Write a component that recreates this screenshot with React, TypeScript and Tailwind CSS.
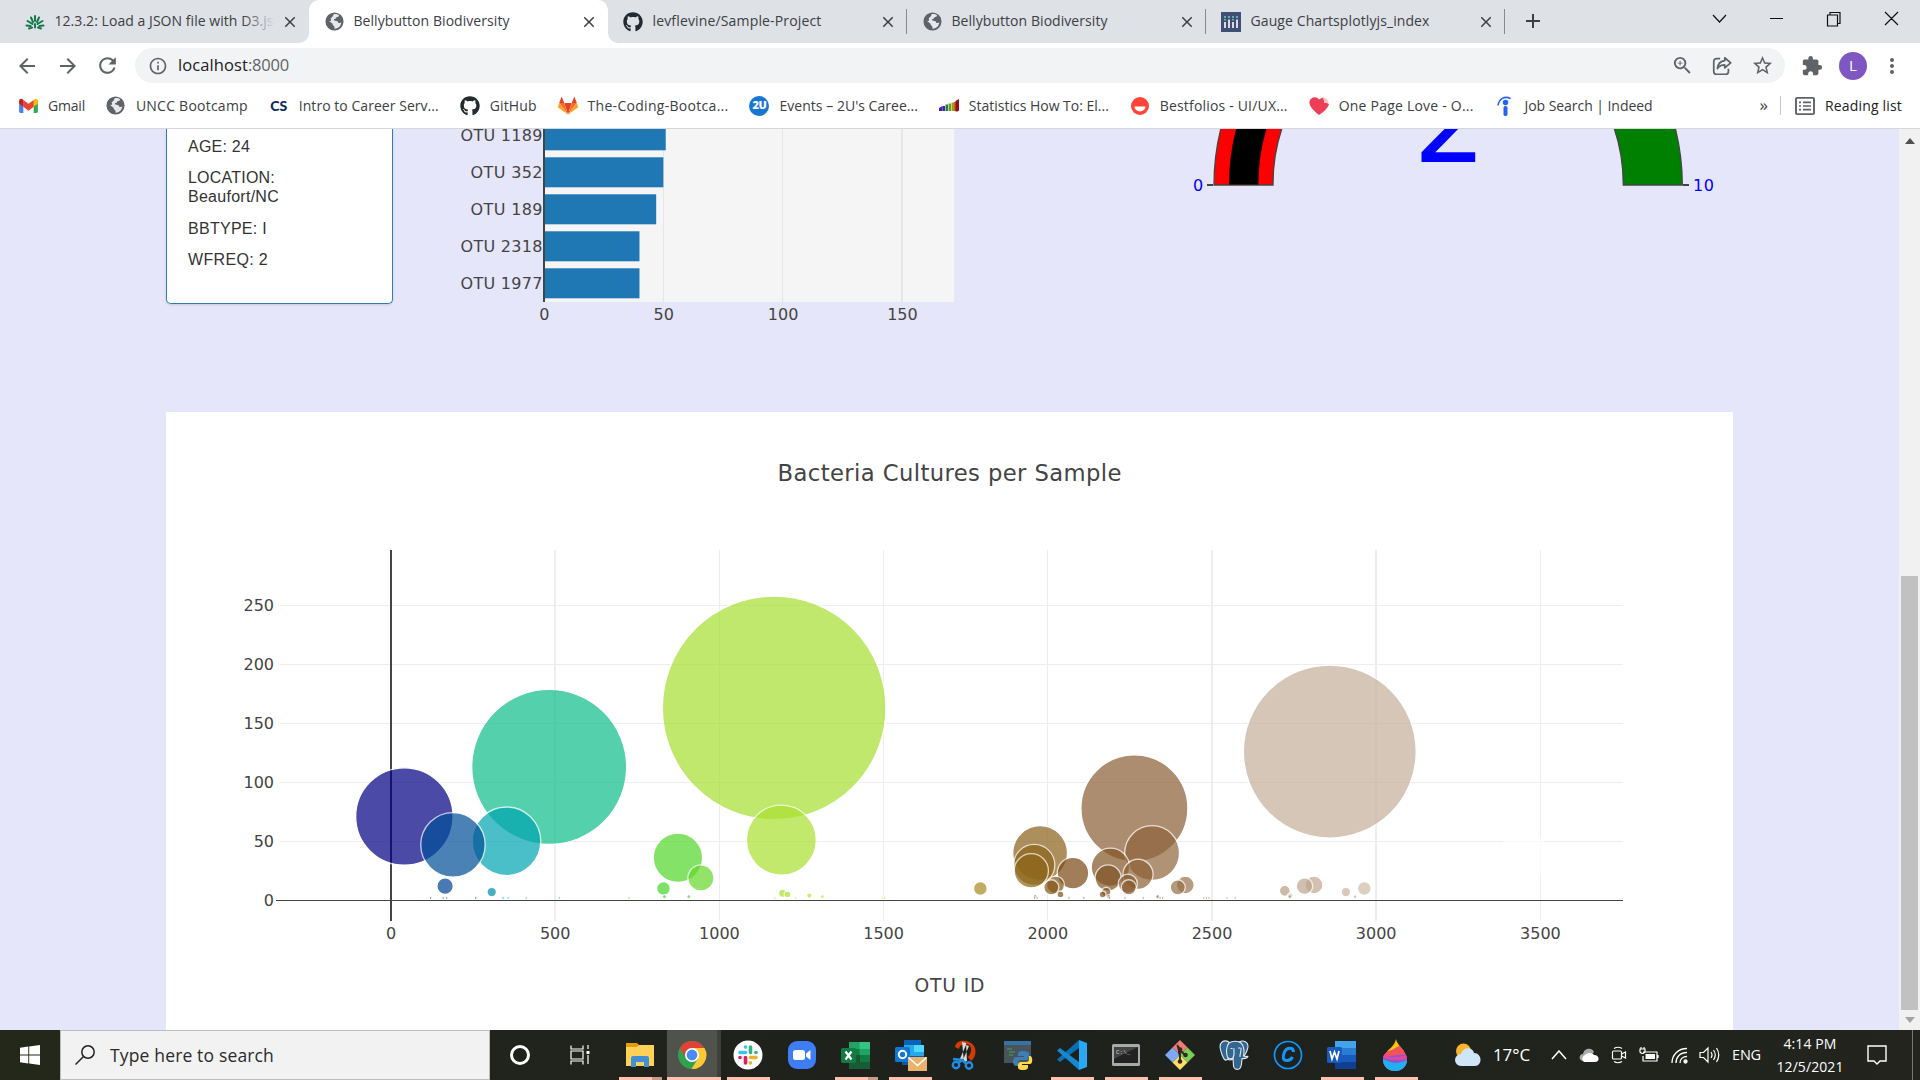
import { useLayoutEffect, useRef, useState } from "react";
import type { ReactNode } from "react";
import { FaGithub } from "react-icons/fa";
import {
  MdArrowBack, MdArrowForward, MdRefresh, MdInfoOutline, MdZoomIn, MdStarBorder,
  MdExtension, MdMoreVert, MdClose, MdAdd,
} from "react-icons/md";

/** Single line of text whose tracking is tuned so that it spans `w` pixels. */
function Fit({ w, children, className = "" }: { w: number; children: string; className?: string }) {
  const ref = useRef<HTMLSpanElement>(null);
  const [ls, setLs] = useState(0);
  useLayoutEffect(() => {
    const el = ref.current;
    if (!el) return;
    setLs((w - el.getBoundingClientRect().width) / children.length);
  }, []);
  return (
    <span ref={ref} className={"inline-block shrink-0 whitespace-nowrap " + className} style={{ letterSpacing: ls }}>
      {children}
    </span>
  );
}

const Globe = () => (
  <svg viewBox="0 0 20 20" className="size-[19px] shrink-0">
    <circle cx="10" cy="10" r="9.500" fill="#5f6368" />
    <path fill="#e6e8eb" d="M9 2.300C11 1.800 13.500 2.400 14.800 3.500 14.500 5 13.500 5.500 12 5.600c-.3 1.400-1.200 1.900-2.700 2.100.2 1.300.9 1.700 2.700 1.800 1.600.1 2 1 2 2.200h1.500c.8 0 1.300-.7 1.500-1.500.3 3-1.600 6-4.600 7-.8.300-1.800.400-2.400.300.2-1.500-.1-2.600-1.300-3.300-.6-.4-.8-1-.8-1.900L3 8.400C3.500 9 4.500 9.500 5.500 9.500 6.800 9.500 6.500 7.500 5.800 7 7 5.900 8.700 4.500 9 2.300z" />
  </svg>
);

const Canvas = () => (
  <svg viewBox="0 0 20 20" className="size-5" fill="none" stroke="#127a4b" strokeWidth="2" strokeLinecap="round">
    <path d="M10 4v5M6 5.500l2 4.500M14 5.500l-2 4.500M2.500 9l5 3M17.500 9l-5 3M1.500 13.500l4 .5M18.500 13.500l-4 .5M4 16.500l3-1M16 16.500l-3-1M10 12v3.500" />
  </svg>
);
const PlotlyIcon = () => (
  <svg viewBox="0 0 20 20" className="size-5">
    <path fill="#3f4f75" d="M0 0h20v20H0z" />
    <path stroke="#fff" strokeWidth="1.600" d="M4 10v6M8 7.500V16M12 10v6M16 7.500V16" />
    <path stroke="#79c5c0" strokeWidth="1.600" d="M4 4v2M4 7v1.500M8 4v2M12 4v2M12 7v1.500M16 4v2" />
  </svg>
);

const tabs: { icon: ReactNode; label: string; w: number; active?: boolean; fade?: boolean; sep?: boolean }[] = [
  { icon: <Canvas />, label: "12.3.2: Load a JSON file with D3.js", w: 219, fade: true },
  { icon: <Globe />, label: "Bellybutton Biodiversity", w: 156, active: true },
  { icon: <FaGithub className="size-5 text-[#24292e]" />, label: "levflevine/Sample-Project", w: 169, sep: true },
  { icon: <Globe />, label: "Bellybutton Biodiversity", w: 156, sep: true },
  { icon: <PlotlyIcon />, label: "Gauge Chartsplotlyjs_index", w: 179, sep: true },
];

function TabStrip() {
  return (
    <div className="flex h-[43px] bg-[#dee1e6] pl-[10px] text-[14px] text-[#3c4043]">
      {tabs.map((t, i) => (
        <div key={i} className={"relative flex w-[299px] shrink-0 items-center pl-[15px] " + (t.active ? "rounded-t-[10px] bg-white" : "")}>
          {t.active && (
            <>
              <svg viewBox="0 0 10 10" className="absolute bottom-0 -left-[10px] size-[10px]"><path fill="#fff" d="M10 0v10H0A10 10 0 0 0 10 0" /></svg>
              <svg viewBox="0 0 10 10" className="absolute -right-[10px] bottom-0 size-[10px]"><path fill="#fff" d="M0 0v10h10A10 10 0 0 1 0 0" /></svg>
            </>
          )}
          <span className="flex w-5 shrink-0 items-center justify-center">{t.icon}</span>
          <span className="relative ml-[9.500px] w-[220px] overflow-hidden pb-[2px]">
            <Fit w={t.w}>{t.label}</Fit>
            {t.fade && <span className="absolute inset-y-0 right-0 w-8 bg-linear-to-r from-transparent to-[#dee1e6]" />}
          </span>
          <MdClose className="ml-[6px] size-[18px] shrink-0" />
          {t.sep && <span className="ml-auto h-[25px] w-px bg-[#868b90]" />}
        </div>
      ))}
      <MdAdd className="mt-[9px] ml-[16px] size-[24px] text-[#3c4043]" />
      <svg viewBox="0 0 200 30" className="mt-[3px] mr-[10px] ml-auto h-[30px] w-[200px]" fill="none" stroke="#111" strokeWidth="1.200">
        <path d="M3 12l6.500 7 6.500-7M60 15.500h13M117.500 12h10v11h-10zM120 12V9.500h10v11h-2.500M175 9l13 13M188 9l-13 13" />
      </svg>
    </div>
  );
}

function AddressBar() {
  return (
    <div className="flex h-[45px] items-center bg-white text-[#5f6368]">
      <MdArrowBack className="ml-[15px] size-[24px]" />
      <MdArrowForward className="ml-[17px] size-[24px]" />
      <MdRefresh className="ml-[15px] size-[25px]" />
      <div className="ml-[15px] flex h-[35px] w-[1650px] items-center rounded-full bg-[#f1f3f4] pl-[13px]">
        <MdInfoOutline className="size-[20px]" />
        <span className="ml-[10px] flex text-[16.500px]">
          <Fit w={70} className="text-[#202124]">localhost</Fit>
          <Fit w={41}>:8000</Fit>
        </span>
        <MdZoomIn className="ml-auto size-[23px]" />
        <svg viewBox="0 0 24 24" className="ml-[17px] size-[22px]" fill="none" stroke="currentColor" strokeWidth="1.900" strokeLinejoin="round">
          <path d="M10 4H6a3 3 0 0 0-3 3v11a3 3 0 0 0 3 3h10a3 3 0 0 0 3-3v-3M15 3l6.500 5.500L15 14v-3.200c-4 0-6 1.200-8 4 .5-5 3-8 8-8.600z" />
        </svg>
        <MdStarBorder className="mr-[11px] ml-[18px] size-[23px]" />
      </div>
      <MdExtension className="ml-[16px] size-[22px]" />
      <span className="ml-[16px] flex size-[28px] items-center justify-center rounded-full bg-[#7e57c2] text-[15px] text-white">L</span>
      <MdMoreVert className="ml-[13px] size-[24px]" />
    </div>
  );
}

const Gmail = () => (
  <svg viewBox="0 0 20 16" className="h-[15px] w-[19px]">
    <path fill="#4285f4" d="M0 3h4.500v13H1.500A1.500 1.500 0 0 1 0 14.500z" />
    <path fill="#34a853" d="M15.500 3H20v11.500a1.500 1.500 0 0 1-1.500 1.500h-3z" />
    <path fill="#fbbc04" d="M15.500 2l1.200-1A2.200 2.200 0 0 1 20 3v3l-4.500 3.400z" />
    <path fill="#ea4335" d="M4.500 2L10 6.200 15.500 2v7.400L10 13.500 4.500 9.400z" />
    <path fill="#c5221f" d="M0 3A2.200 2.200 0 0 1 3.300 1l1.200 1v7.400L0 6z" />
  </svg>
);
const Gitlab = () => (
  <svg viewBox="0 0 20 19" className="h-[19px] w-5">
    <path fill="#e24329" d="M10 18.500L6.300 7h7.400z" />
    <path fill="#fc6d26" d="M10 18.500L6.300 7H1.200zM10 18.500L13.700 7h5.100z" />
    <path fill="#fca326" d="M1.200 7L0 10.500q-.2.700.4 1.200L10 18.500zM18.800 7l1.200 3.500q.2.700-.4 1.200L10 18.500z" />
    <path fill="#e24329" d="M1.200 7L3.700.500 6.300 7zM18.800 7L16.300.500 13.700 7z" />
  </svg>
);
const StatBars = () => (
  <svg viewBox="0 0 20 13" className="h-[13px] w-5">
    <path fill="#4a1fc0" d="M0 9l3.500-2v5H0z" /><path fill="#3a2f9a" d="M3.500 7H6v5H3.500z" /><path fill="#2c7a48" d="M6.500 5.500H9V12H6.500z" />
    <path fill="#5fa52c" d="M9.500 4.500H12V12H9.500z" /><path fill="#a9981c" d="M12.500 3.500H15V12h-2.500z" />
    <path fill="#c8641e" d="M15 3h2v9h-2z" /><path fill="#8f1018" d="M16.500 2L20 0v11.500l-1.500 1h-2z" />
  </svg>
);

const bookmarks: { icon: ReactNode; label: string; w: number }[] = [
  { icon: <Gmail />, label: "Gmail", w: 37 },
  { icon: <Globe />, label: "UNCC Bootcamp", w: 112 },
  { icon: <span className="font-[Lato] text-[14px] font-black text-[#0b2a5b]">CS</span>, label: "Intro to Career Serv...", w: 140 },
  { icon: <FaGithub className="size-5 text-[#24292e]" />, label: "GitHub", w: 47 },
  { icon: <Gitlab />, label: "The-Coding-Bootca...", w: 141 },
  { icon: <span className="flex size-5 shrink-0 items-center justify-center rounded-full bg-[#1976d2] text-[11px] font-extrabold tracking-tighter text-white">2U</span>, label: "Events – 2U's Caree...", w: 138.5 },
  { icon: <StatBars />, label: "Statistics How To: El...", w: 140 },
  { icon: <svg viewBox="0 0 18 18" className="size-[18px]"><circle cx="9" cy="9" r="9" fill="#ff4438" /><path fill="#fff" d="M3.500 9.500h11a5.500 5 0 0 1-11 0z" /></svg>, label: "Bestfolios - UI/UX...", w: 128 },
  { icon: <svg viewBox="0 0 20 18" className="h-[18px] w-5"><path fill="#ee3d57" d="M10 18C2 11.500 0 8 .5 4.500 1.200.500 7-1.500 10 2.500l4-2 6 7C18.500 11.500 15 14.500 10 18z" /><path fill="#f7c4c4" d="M13.500.500c4-.5 6 3 6 6.500-1.500-1.500-3-1-4.500-1 .5-2-.5-4-1.500-5.500z" /></svg>, label: "One Page Love - O...", w: 135 },
  { icon: <svg viewBox="0 0 20 20" className="size-5" fill="#2164f3"><circle cx="10.500" cy="6.500" r="2.700" /><rect x="8.500" y="10" width="4" height="10" rx="1.800" /><path fill="none" stroke="#2164f3" strokeWidth="1.500" d="M3 9.500C4 3 9.500-.5 15.500 2.500" /></svg>, label: "Job Search | Indeed", w: 128 },
];

function Bookmarks() {
  return (
    <div className="flex h-[41px] items-center gap-[20.900px] border-b border-[#d5d7db] bg-white pb-[5px] pl-[18px] text-[14px] text-[#3c4043]">
      {bookmarks.map((b) => (
        <div key={b.label} className="flex shrink-0 items-center gap-[10px]">
          <span className="flex w-5 items-center justify-center">{b.icon}</span>
          <Fit w={b.w}>{b.label}</Fit>
        </div>
      ))}
      <div className="ml-auto flex items-center pr-[18px]">
        <span className="pb-[2px] text-[17px] leading-none">»</span>
        <span className="ml-[12px] h-[19px] w-px bg-[#c4c7cb]" />
        <svg viewBox="0 0 20 20" className="mr-[10px] ml-[14px] h-[18px] w-5" fill="none" stroke="#5f6368" strokeWidth="1.900" preserveAspectRatio="none">
          <rect x="1" y="1" width="18" height="18" rx="1" /><path d="M4 6h2M8 6h8M4 10h2M8 10h8M4 14h2M8 14h8" />
        </svg>
        <Fit w={77} className="text-[#202124]">Reading list</Fit>
      </div>
    </div>
  );
}

function Demographics() {
  return (
    <div className="flex h-[175px] w-[227px] shrink-0 flex-col gap-[12.300px] rounded-b-[5px] border border-t-0 border-[#337ab7] bg-white pt-[8px] pl-[21px] font-['Liberation_Sans'] text-[16px] leading-[19px] text-[#333] shadow-sm">
      <p><Fit w={62}>AGE: 24</Fit></p>
      <p><Fit w={87}>LOCATION:</Fit><br /><Fit w={91}>Beaufort/NC</Fit></p>
      <p><Fit w={79}>BBTYPE: I</Fit></p>
      <p><Fit w={80}>WFREQ: 2</Fit></p>
    </div>
  );
}

const bars = [
  { id: "OTU 1189", v: 51, y: 120.3 }, { id: "OTU 352", v: 50, y: 157.3 }, { id: "OTU 189", v: 47, y: 194.3 },
  { id: "OTU 2318", v: 40, y: 231.3 }, { id: "OTU 1977", v: 40, y: 268.3 },
];

function BarChart() {
  return (
    <svg viewBox="450 129 510 211" className="ml-[57px] h-[211px] w-[510px] shrink-0 font-['DejaVu_Sans'] text-[16px]" fill="#444">
      <rect x="544" y="129" width="410" height="173" fill="#f5f5f5" />
      <path stroke="#e6e6e6" d="M663.500 129v173M782.500 129v173" />
      <path stroke="#e6e6e6" strokeWidth="2" d="M902 129v173" />
      {bars.map((b) => (
        <g key={b.id}>
          <rect x="544" y={b.y} width={b.v * 2.387} height="30" fill="#1f77b4" />
          <text x="542.500" y={b.y + 20.2} textAnchor="end" textLength={b.id.length === 8 ? 82 : 72}>{b.id}</text>
        </g>
      ))}
      <path stroke="#444" strokeWidth="2" d="M544 129v173" />
      {[0, 50, 100, 150].map((v) => (
        <text key={v} x={544.4 + v * 2.387} y="320" textAnchor="middle">{v}</text>
      ))}
    </svg>
  );
}

function Gauge() {
  return (
    <svg viewBox="1180 129 550 80" className="ml-[220px] h-[80px] w-[550px] shrink-0 font-['DejaVu_Sans'] text-[16px]" fill="#00f">
      <path fill="red" stroke="#444" strokeWidth="1.300" d="M1214 185A234 234 0 0 1 1258.500 47.500L1306 82A175 175 0 0 0 1273 185z" />
      <path fill="#000" d="M1229 184.500A219.200 219.200 0 0 1 1270.500 56L1294.500 73A189.800 189.800 0 0 0 1258.400 184.500z" />
      <path fill="green" stroke="#444" strokeWidth="1.300" d="M1682.300 185A234 234 0 0 0 1637.500 47.500L1590 82A175 175 0 0 1 1623.300 185z" />
      <path stroke="#444" strokeWidth="2" d="M1207 185h6M1683 185h6" />
      <text x="1198" y="191" textAnchor="middle">0</text>
      <text x="1693" y="191" textLength="21">10</text>
      <text x="1413" y="162" className="text-[116px]">2</text>
    </svg>
  );
}

const otuIds = [1167, 2859, 482, 2264, 41, 1189, 352, 189, 2318, 1977, 3450, 874, 1959, 2191, 1950, 2077, 2275, 944, 2184, 2244, 2024, 2419, 2811, 165, 2782, 2247, 2011, 2396, 830, 2964, 1795, 2722, 307, 2178, 2908, 1193, 2167, 1208, 2039, 1274, 2739, 2737, 1314, 1962, 2186, 2335, 2936, 907, 833, 2483, 2475, 2491, 2291, 159, 2571, 2350, 2342, 2546, 725, 170, 1505, 513, 259, 1169, 258, 1232, 1497, 1498, 1503, 412, 2235, 1960, 1968, 121, 2065, 340, 2110, 2188, 357, 342];
const counts = [163, 126, 113, 78, 71, 51, 50, 47, 40, 40, 37, 36, 30, 28, 25, 23, 22, 19, 19, 14, 13, 13, 13, 12, 12, 11, 11, 11, 10, 10, 10, 8, 7, 7, 7, 6, 5, 5, 5, 4, 4, 3, 3, 3, 3, 3, 3, 3, 3];

const earth: [number, number[]][] = [[0, [0, 0, 130]], [0.1, [0, 180, 180]], [0.2, [40, 210, 40]], [0.4, [230, 230, 50]], [0.6, [120, 70, 20]], [1, [255, 255, 255]]];

function earthColor(id: number) {
  const t = (id - 41) / (3450 - 41);
  const i = Math.max(1, earth.findIndex(([s]) => s >= t));
  const [a, ca] = earth[i - 1];
  const [b, cb] = earth[i];
  return `rgb(${ca.map((c, k) => Math.round(c + ((cb[k] - c) * (t - a)) / (b - a))).join(",")})`;
}

function BubbleChart() {
  return (
    <svg viewBox="166 412 1567 618" className="h-[618px] w-[1567px] shrink-0 bg-white font-['DejaVu_Sans'] text-[16px]" fill="#444">
      <text x="777.500" y="481" className="text-[22.700px]" textLength="344">Bacteria Cultures per Sample</text>
      <path stroke="#eee" d="M280 605.500h1343M280 664.500h1343M280 723.500h1343M280 782.500h1343M280 841.500h1343M719.500 550v371M883.500 550v371M1047.500 550v371M1540.500 550v371" />
      <path stroke="#eee" strokeWidth="2" d="M555 550v371M1212 550v371M1376 550v371" />
      <path stroke="#444" strokeWidth="2" d="M391 550v371" />
      <path stroke="#444" d="M276 900.500h1347" />
      {otuIds.map((id, i) => {
        const v = counts[i] ?? 2;
        return <circle key={i} cx={390.9 + id * 0.3284} cy={900.3 - v * 1.18} r={v * 0.686} fill={earthColor(id)} stroke="#fff" strokeWidth="1.333" opacity="0.7" />;
      })}
      {[0, 50, 100, 150, 200, 250].map((v) => (
        <text key={v} x="274" y={906 - v * 1.18} textAnchor="end">{v}</text>
      ))}
      {[0, 500, 1000, 1500, 2000, 2500, 3000, 3500].map((v) => (
        <text key={v} x={391 + v * 0.3284} y="939" textAnchor="middle">{v}</text>
      ))}
      <text x="914.500" y="991.500" className="text-[18.700px]" textLength="70">OTU ID</text>
    </svg>
  );
}

const ic = "h-[30px] w-[30px]";
const Explorer = () => <svg viewBox="0 0 30 30" className={ic}><path fill="#e3a100" d="M1 3h11l3 3v5H1z" /><path fill="#ffd257" d="M1 7h11l2-2h15v21H1z" /><path fill="#3f8fd8" d="M6 27V18a2 2 0 0 1 2-2h14a2 2 0 0 1 2 2v9h-5v-5h-8v5z" /></svg>;
const Chrome = () => <svg viewBox="0 0 30 30" className={ic}><circle cx="15" cy="15" r="14" fill="#2fa14f" /><path fill="#fcc934" d="M15 8h12.500A14 14 0 0 1 14.500 29l6.500-10.500z" /><path fill="#e04336" d="M2.900 8A14 14 0 0 1 27.200 8H15a7 7 0 0 0-6.300 10.300z" /><circle cx="15" cy="15" r="7" fill="#fff" /><circle cx="15" cy="15" r="5.400" fill="#4a8af4" /></svg>;
const Slack = () => <svg viewBox="0 0 30 30" className={ic}><circle cx="15" cy="15" r="14.500" fill="#fff" /><g strokeWidth="3.600" strokeLinecap="round"><path stroke="#36c5f0" d="M7 12.500h5.500M12.500 7v.1" /><path stroke="#2eb67d" d="M17.500 7v5.500M23 12.500h-.1" /><path stroke="#ecb22e" d="M17.500 17.500H23M17.500 23v-.1" /><path stroke="#e01e5a" d="M12.500 17.500V23M7 17.500h.1" /></g></svg>;
const Zoom = () => <svg viewBox="0 0 30 30" className={ic}><rect x="1" y="1" width="28" height="28" rx="9" fill="#3f7df5" /><rect x="6" y="10" width="12" height="10" rx="2.500" fill="#fff" /><path fill="#fff" d="M19 13.500l4.500-3.500v10L19 16.500z" /></svg>;
const Excel = () => <svg viewBox="0 0 30 30" className={ic}><path fill="#21a366" d="M8 2h21v13H8z" /><path fill="#33c481" d="M18.500 2H29v7H18.500z" /><path fill="#107c41" d="M8 9h10.500v6H8zM18.500 15H29v7H18.500z" /><path fill="#185c37" d="M8 15h10.500v7H29v7H8z" /><rect y="8" width="15" height="15" rx="1.500" fill="#107c41" /><path stroke="#fff" strokeWidth="2.200" d="M4.500 11.500l6 8M10.500 11.500l-6 8" /></svg>;
const Outlook = () => <svg viewBox="0 0 33 32" className="ml-[2px] h-8 w-[33px]"><path fill="#0a63b8" d="M9 1h17v9H9z" /><path fill="#28a8ea" d="M9 6h20v15H9z" /><path fill="#50d9ff" d="M19 6h10v7H19z" /><path fill="#0f5aa7" d="M7 17h22v9H7z" /><rect x="0" y="8" width="15" height="15" rx="1.500" fill="#0f78d4" /><circle cx="7.500" cy="15.500" r="3.700" fill="none" stroke="#fff" strokeWidth="2" /><path fill="#eab26a" d="M13 18h19v14H13z" /><path fill="none" stroke="#fff" strokeWidth="1.500" d="M13.500 18.500l9 8 9-8" /></svg>;
const Snip = () => <svg viewBox="0 0 30 30" className={ic}><path fill="#d83b01" d="M6 7C7 0 16-1 22 3s6 13 0 18l-3-4c3-3 4-8 2-11S11 3 10 9z" /><path fill="#d9d9d9" d="M13 2l4 1 1 18-3 1zM20 6l-3-1-7 16 3 1z" /><g fill="none" stroke="#1f8ee0" strokeWidth="2.400"><circle cx="7" cy="25" r="3.200" /><circle cx="20" cy="25.500" r="3.200" /><path d="M4 19l9 1 4 3.500M10 22.500l4-3" /></g></svg>;
const Python = () => <svg viewBox="0 0 30 30" className={ic}><path fill="#48545c" d="M1 1h27v22H1z" /><path fill="#3673a5" d="M1 1h27v4H1z" /><path stroke="#3aa655" strokeWidth="1.200" d="M4 9h5M6 12h6M6 15h4" /><path fill="#3d7db8" d="M20 11c-4 0-5 1-5 3v2h6v1h-8c-4 0-4 9 0 9h2v-3c0-2 1-3 3-3h5c2 0 3-1 3-3v-3c0-2-2-3-6-3z" /><path fill="#ffd94b" d="M20 30c4 0 5-1 5-3v-2h-6v-1h8c3 0 3-8 0-8h-1v3c0 2-1 3-3 3h-5c-2 0-3 1-3 3v2c0 2 1 3 5 3z" /></svg>;
const VSCode = () => <svg viewBox="0 0 30 30" className={ic}><path fill="#0a6fb5" d="M0 19.500L22 0v8L3 22z" /><path fill="#1588d1" d="M0 10.500L3 8l19 14v8z" /><path fill="#29a9f2" d="M22 0l8 3v24l-8 3z" /></svg>;
const Terminal = () => <svg viewBox="0 0 30 30" className={ic}><rect x="1" y="4" width="28" height="22" rx="1.500" fill="#a9a9a9" /><path fill="#222" d="M3 7h24v16H3z" /><path fill="#444" d="M3 7h24L3 19z" /><text x="5" y="14" fill="#ccc" className="font-['Liberation_Mono'] text-[6px]">C:\_</text></svg>;
const Git = () => <svg viewBox="0 0 30 30" className={ic}><path fill="#f17b78" d="M15 0l7.500 7.500L15 15 7.500 7.500z" /><path fill="#7fa9f7" d="M7.500 7.500L15 15l-7.500 7.500L0 15z" /><path fill="#7ccf55" d="M22.500 7.500L30 15l-7.500 7.500L15 15z" /><path fill="#fbdd6c" d="M15 15l7.500 7.500L15 30l-7.500-7.500z" /><path stroke="#332a1f" strokeWidth="1.800" d="M12 5l3 4v13M15 10l5 5" /><g fill="#332a1f"><circle cx="15" cy="9.500" r="2.300" /><circle cx="15" cy="21.500" r="2.300" /><circle cx="20.500" cy="15" r="2.300" /></g></svg>;
const Postgres = () => <svg viewBox="0 0 30 30" className={ic} fill="#336791" stroke="#e3eaf2" strokeWidth="1.100" strokeLinejoin="round" strokeLinecap="round"><path d="M10 2C4-1 .5 3 1.200 8c.6 4 2.800 10.500 5 12 1.500.8 2.800-1.500 3.800-2.500zM20 2c5-2.500 9 .5 9 4 0 4-2.500 8-4 10.500z" /><path d="M10 3c3-2 9-2.500 12 0s3.500 9 2.500 13c1.500.8 3 .3 4.500.3-.8 1.900-3.500 2.500-6 2.200-.5 3 .3 9-3 10.500-2.500.8-5 .3-5.500-3l-.5-8c-2 1.500-4.500 1-5.500-1C7 13 7 6 10 3z" /><path fill="none" d="M14 17.500c2-2 .5-6 1-9M21 16.500c0-4 1.500-5 1-8.500M12 8.500h1.200M19.500 8h1.200M9 19.500c2 .8 3.500.3 5-.5" /></svg>;
const CIcon = () => <svg viewBox="0 0 30 30" className={ic}><circle cx="15" cy="15" r="13.500" fill="none" stroke="#0d97ff" strokeWidth="1.700" /><path fill="none" stroke="#0d97ff" strokeWidth="3" d="M20.500 12c0-5-7-5-9 0s-2 8.500 2.500 8.500c3 0 4.500-1.500 5.500-3.500" /></svg>;
const Word = () => <svg viewBox="0 0 30 30" className={ic}><path fill="#41a5ee" d="M8 1h21v8H8z" /><path fill="#2b7cd3" d="M8 8h21v7H8z" /><path fill="#185abd" d="M8 15h21v7H8z" /><path fill="#103f91" d="M8 22h21v7H8z" /><rect y="7" width="15" height="16" rx="1.500" fill="#185abd" /><path fill="none" stroke="#fff" strokeWidth="1.700" d="M3 11l2 8 2.500-7 2.500 7 2-8" /></svg>;
const Paint = () => (
  <svg viewBox="0 0 24 32" className="mr-[3px] h-[32px] w-[24px]">
    <clipPath id="drop"><path d="M13 0c.5 6 11 12 11 20.500C24 27.500 18.500 32 12 32S0 27.500 0 20.500C0 12 11 10 13 0z" /></clipPath>
    <g clipPath="url(#drop)">
      <path fill="#fbc800" d="M0 0h24v12H0z" />
      <path fill="#f0525f" d="M0 12c8 1 12-3 18-6l6 6v20H0z" />
      <path fill="#8f52d0" d="M0 16c7 3 14-1 24 0v16H0z" />
      <path fill="#e0479e" d="M0 15c6 3 10 5 24 1v4C12 22 6 20 0 19z" />
      <path fill="#1fb0f0" d="M0 20c8 4 14 6 24 1v12H0z" />
    </g>
  </svg>
);

const apps: { name: string; el: ReactNode; line?: "one" | "two"; active?: boolean }[] = [
  { name: "explorer", el: <Explorer />, line: "two" },
  { name: "chrome", el: <Chrome />, active: true },
  { name: "slack", el: <Slack />, line: "one" },
  { name: "zoom", el: <Zoom /> },
  { name: "excel", el: <Excel />, line: "two" },
  { name: "outlook", el: <Outlook />, line: "one" },
  { name: "snip", el: <Snip /> },
  { name: "idle", el: <Python /> },
  { name: "code", el: <VSCode />, line: "one" },
  { name: "terminal", el: <Terminal />, line: "one" },
  { name: "git", el: <Git />, line: "one" },
  { name: "postgres", el: <Postgres /> },
  { name: "c", el: <CIcon /> },
  { name: "word", el: <Word />, line: "one" },
  { name: "paint", el: <Paint />, line: "one" },
];

function Taskbar() {
  return (
    <div className="flex h-[50px] bg-linear-to-r from-[#24281a] via-[#1e201c] to-[#22241d] text-white">
      <div className="flex w-[60px] items-center justify-center">
        <svg viewBox="0 0 20 20" className="size-5" fill="#fff"><path d="M0 2.800l8.300-1.200v7.900H0zM9.200 1.500L20 0v9.500H9.200zM0 10.500h8.300v7.900L0 17.200zM9.200 10.500H20V20L9.200 18.500z" /></svg>
      </div>
      <div className="flex w-[430px] items-center border border-[#bdbdbd] bg-[#f2f2f2] text-[#2b2b2b]">
        <svg viewBox="0 0 20 20" className="ml-[14px] size-5" fill="none" stroke="#222" strokeWidth="1.500"><circle cx="13" cy="7" r="6.200" /><path d="M8.500 11.500L.5 19.500" /></svg>
        <Fit w={164} className="ml-[15px] text-[17.500px]">Type here to search</Fit>
      </div>
      <div className="flex w-[60px] items-center justify-center"><span className="size-5 rounded-full border-[3px] border-white" /></div>
      <div className="flex w-[63px] items-center justify-center pr-[3px]">
        <svg viewBox="0 0 20 20" className="size-5" fill="none" stroke="#fff" strokeWidth="1.200"><path d="M1 .5V4h12V.5M1 19.500V16h12v3.500M1 6h12v8H1zM18 0v4M18 10v9" /><path fill="#fff" stroke="none" d="M16.500 6h3v3h-3z" /></svg>
      </div>
      {apps.map((a) => (
        <div key={a.name} className={"flex w-[54px] shrink-0 flex-col " + (a.active ? "bg-[#50524c]" : "")}>
          <div className={"flex h-[47px] w-full items-center justify-center pt-[3px] " + (a.active ? "border-r-[4px] border-[#3e403a] pr-px" : "")}>{a.el}</div>
          {a.active && <span className="h-[3px] w-full bg-[#ffc0ad]" />}
          {a.line === "one" && <span className="ml-[6px] h-[3px] w-[43px] bg-[#ffc0ad]" />}
          {a.line === "two" && <span className="ml-[6px] flex h-[3px] w-[43px] bg-[#c79a8c]"><span className="w-[33px] bg-[#ffc0ad]" /></span>}
        </div>
      ))}
      <div className="ml-[32px] flex shrink-0 items-center">
        <svg viewBox="0 0 26 24" className="h-[24px] w-[26px]"><circle cx="8.500" cy="8" r="7.500" fill="#f8b52c" /><path fill="#cfe6f8" d="M6 23a6 6 0 0 1 0-12C8 3 18 4 19 10c8.500 0 8.500 13 1 13z" /></svg>
        <Fit w={37} className="ml-[12px] text-[17px]">17°C</Fit>
        <svg viewBox="0 0 16 10" className="ml-[21px] h-[10px] w-4" fill="none" stroke="#fff" strokeWidth="1.500"><path d="M1 9l7-8 7 8" /></svg>
        <svg viewBox="0 0 20 14" className="ml-[12px] h-[14px] w-5"><path fill="#aaa" d="M4 13C-1 12 0 6 4 6c1-6 9-7 11-2L6 13z" /><path fill="#fff" d="M5 14a4 4 0 0 1 1-7c3-3 8-2 9 0 6 0 6 7 1 7z" /></svg>
        <svg viewBox="0 0 16 18" className="ml-[12px] h-[18px] w-4" fill="none" stroke="#fff" strokeWidth="1.200"><rect x="1.500" y="5" width="9" height="8" rx="1" /><path d="M10.500 8l4-2v6l-4-2M3 2.500q4-2.500 8 0M3 15.500q4 2.500 8 0" /></svg>
        <svg viewBox="0 0 20 16" className="ml-[12px] h-4 w-5" fill="none" stroke="#fff" strokeWidth="1.200"><path d="M4 5h14v9H4V9M1 2h5v3q-2.500 3-5 0zM2 2V0M5 2V0M19 8v3" /><path fill="#fff" stroke="none" d="M6.500 7H16v5H6.500z" /></svg>
        <svg viewBox="0 0 18 17" className="ml-[12px] h-[17px] w-[18px]" fill="none" stroke="#fff" strokeWidth="1.300"><path d="M1 16C1 8 7 1.500 16 1.500M5 16c0-6 4-10.500 11-10.500M9 16c0-4 3-6.500 7-6.500" /><circle cx="14.500" cy="14.500" r="1.500" fill="#fff" /></svg>
        <svg viewBox="0 0 22 18" className="ml-[10px] h-[18px] w-[22px]" fill="none" stroke="#fff" strokeWidth="1.200"><path d="M1 6.500h3.500L9 2v14l-4.500-4.500H1zM12 6q2 3 0 6M14.500 4q3.500 5 0 10M17.500 2q4.500 7 0 14" /></svg>
        <Fit w={29} className="ml-[11px] text-[14.500px]">ENG</Fit>
        <div className="ml-[14px] flex w-[70px] flex-col items-center text-[14px] leading-[23px]">
          <Fit w={53}>4:14 PM</Fit>
          <Fit w={67}>12/5/2021</Fit>
        </div>
        <svg viewBox="0 0 20 20" className="ml-[22px] h-5 w-5" fill="none" stroke="#fff" strokeWidth="1.400"><path d="M1 1h18v15h-6l-3 3-3-3H1z" /></svg>
        <span className="ml-[25px] h-[50px] w-px bg-[#777]" />
      </div>
    </div>
  );
}

export default function App() {
  return (
    <div className="flex h-[1080px] w-[1920px] flex-col overflow-hidden bg-white font-['Open_Sans',sans-serif]">
      <TabStrip />
      <AddressBar />
      <Bookmarks />
      <main className="flex h-[901px] bg-[#e6e6fa]">
        <div className="w-[1899px] overflow-hidden pl-[166px]">
          <section className="flex h-[283px] items-start">
            <Demographics />
            <BarChart />
            <Gauge />
          </section>
          <BubbleChart />
        </div>
        <div className="flex w-[21px] flex-col items-center bg-[#f1f1f1]">
          <svg viewBox="0 0 10 6" className="mt-[9px] h-[6px] w-[10px]"><path fill="#505050" d="M0 6l5-6 5 6z" /></svg>
          <div className="mt-[432px] h-[434px] w-[17px] bg-[#c1c1c1]" />
          <svg viewBox="0 0 10 6" className="mt-[7px] h-[6px] w-[10px]"><path fill="#a3a3a3" d="M0 0l5 6 5-6z" /></svg>
        </div>
      </main>
      <Taskbar />
    </div>
  );
}
